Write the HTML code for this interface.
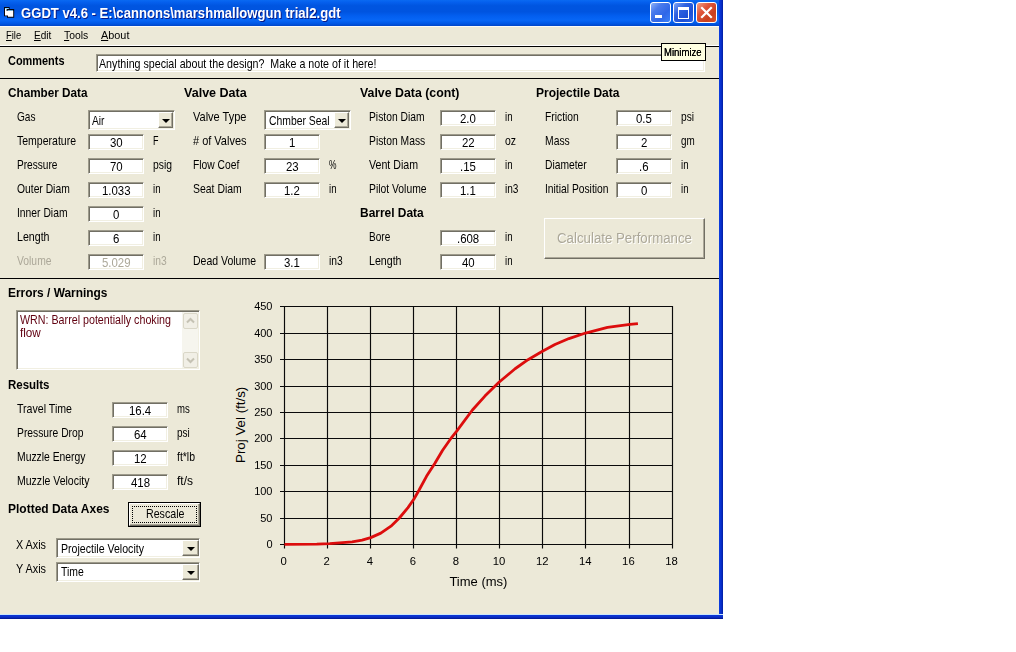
<!DOCTYPE html>
<html><head><meta charset="utf-8"><title>GGDT</title>
<style>
html,body{margin:0;padding:0;background:#fff;}
body{width:1016px;height:652px;position:relative;overflow:hidden;font-family:"Liberation Sans",sans-serif;}
#win{position:absolute;left:0;top:0;width:719px;height:614px;background:#ece9d8;}
#rb{position:absolute;left:719px;top:0;width:4px;height:619px;background:linear-gradient(to right,#0b3fe0 0,#0831d2 40%,#0628bc 75%,#001c9c 100%);}
#bb{position:absolute;left:0;top:614px;width:723px;height:5px;background:linear-gradient(#c9e6fb 0,#c9e6fb 1px,#0a35d8 1px,#0a30c8 3px,#00138c 5px);}
#tb{position:absolute;left:0;top:0;width:723px;height:26px;background:linear-gradient(to bottom,#0a6af2 0%,#0560ee 8%,#0055e0 22%,#0054e0 45%,#035ff0 62%,#0766f6 78%,#0058e6 90%,#0046c8 100%);}
.t{position:absolute;white-space:pre;transform-origin:0 0;color:#000;}
.ln{position:absolute;left:0;width:719px;height:1px;background:#000;}
.in{position:absolute;box-sizing:border-box;background:#fff;border:1px solid;border-color:#9d9a8b #fff #fff #9d9a8b;box-shadow:inset 1px 1px 0 #716f64,inset -1px -1px 0 #f1efe2;}
.cb{position:absolute;box-sizing:border-box;background:#ece9d8;border:1px solid;border-color:#fff #716f64 #716f64 #fff;box-shadow:inset -1px -1px 0 #aca899;}
.cb:after{content:"";position:absolute;left:50%;top:50%;margin:-1.5px 0 0 -4px;border:4px solid transparent;border-top:4.5px solid #000;border-bottom:none;}
.wb{position:absolute;top:2px;width:21px;height:21px;box-sizing:border-box;border:1px solid #fff;border-radius:3px;}
</style></head><body>
<div id="win"></div>
<div id="tb"></div>
<div id="rb"></div>
<div id="bb"></div>
<!-- title icon -->
<svg style="position:absolute;left:0;top:0" width="20" height="22" viewBox="0 0 20 22"><path d="M4 7H9.6V9H14.2V17.7H7V16.3H4Z" fill="#050510"/><path d="M5 11H13.2V16.8H8V15.4H5Z" fill="#fff"/><path d="M5 9H6.6V11H5Z" fill="#fff"/><rect x="5" y="8" width="3.8" height="1" fill="#8fd8ff"/><rect x="7.5" y="10" width="5.6" height="0.8" fill="#8fd8ff"/></svg>
<!-- window buttons -->
<div class="wb" style="left:650px;background:linear-gradient(135deg,#8db2fa 0%,#4a7bec 30%,#2f67e8 65%,#3b82fa 100%)"><div style="position:absolute;left:4px;top:12px;width:7px;height:3px;background:#fff"></div></div>
<div class="wb" style="left:673px;background:linear-gradient(135deg,#7fa6f6 0%,#2f62e0 35%,#1e50d6 70%,#2a63e6 100%)"><div style="position:absolute;left:4px;top:4px;width:9px;height:8px;border:1px solid #fff;border-top:3px solid #fff;box-sizing:content-box"></div></div>
<div class="wb" style="left:696px;background:linear-gradient(135deg,#f0a088 0%,#e0553a 35%,#c8401e 70%,#d8502a 100%)"><svg width="19" height="19" style="position:absolute;left:0;top:0"><path d="M5 5L14 14M14 5L5 14" stroke="#fff" stroke-width="2.2" stroke-linecap="square"/></svg></div>
<!-- separators -->
<div class="ln" style="top:26px;background:#fbfaf6"></div>
<div class="ln" style="top:45px;background:#fff"></div>
<div class="ln" style="top:46px"></div>
<div class="ln" style="top:78px"></div>
<div class="ln" style="top:278px"></div>
<!-- comments input -->
<div class="in" style="left:96px;top:54px;width:609px;height:18px"></div>
<!-- combos -->
<div class="in" style="left:88px;top:110px;width:87px;height:20px"></div><div class="cb" style="left:158px;top:112px;width:15px;height:16px"></div>
<div class="in" style="left:264px;top:110px;width:87px;height:20px"></div><div class="cb" style="left:334px;top:112px;width:15px;height:16px"></div>
<div class="in" style="left:56px;top:538px;width:144px;height:20px"></div><div class="cb" style="left:182px;top:540px;width:17px;height:16px"></div>
<div class="in" style="left:56px;top:562px;width:144px;height:20px"></div><div class="cb" style="left:182px;top:564px;width:17px;height:16px"></div>
<!-- errors textarea -->
<div class="in" style="left:16px;top:310px;width:184px;height:60px"></div>
<div style="position:absolute;left:182px;top:312px;width:16px;height:56px;background:#f6f5ee"></div>
<div style="position:absolute;left:183px;top:313px;width:15px;height:16px;box-sizing:border-box;border:1px solid #dad7c8;border-radius:2px;background:#f1efe6"><svg width="13" height="14" style="position:absolute;left:0;top:0"><path d="M3 8.5L6.5 5L10 8.5" stroke="#c5c2b4" stroke-width="2" fill="none"/></svg></div>
<div style="position:absolute;left:183px;top:352px;width:15px;height:16px;box-sizing:border-box;border:1px solid #dad7c8;border-radius:2px;background:#f1efe6"><svg width="13" height="14" style="position:absolute;left:0;top:0"><path d="M3 5.5L6.5 9L10 5.5" stroke="#c5c2b4" stroke-width="2" fill="none"/></svg></div>
<!-- calc button -->
<div style="position:absolute;left:544px;top:218px;width:161px;height:41px;box-sizing:border-box;border:1px solid;border-color:#fff #716f64 #716f64 #fff;box-shadow:inset -1px -1px 0 #aca899"></div>
<!-- rescale button -->
<div style="position:absolute;left:128px;top:502px;width:73px;height:25px;box-sizing:border-box;border:1px solid #000;"><div style="position:absolute;left:0;top:0;right:0;bottom:0;border:1px solid;border-color:#fff #716f64 #716f64 #fff;box-shadow:inset -1px -1px 0 #aca899"></div><div style="position:absolute;left:3px;top:3px;right:3px;bottom:3px;border:1px dotted #000"></div></div>
<!-- tooltip -->
<div style="position:absolute;left:661px;top:43px;width:45px;height:18px;box-sizing:border-box;border:1px solid #000;background:#ffffe1"></div>
<svg style="position:absolute;left:0;top:0" width="723" height="619" viewBox="0 0 723 619"><path d="M284.5 306V548.5M327.5 306V548.5M370.5 306V548.5M413.5 306V548.5M456.5 306V548.5M499.5 306V548.5M542.5 306V548.5M585.5 306V548.5M629.5 306V548.5M672.5 306V548.5M280 544.5H673M280 518.5H673M280 491.5H673M280 465.5H673M280 438.5H673M280 412.5H673M280 386.5H673M280 359.5H673M280 333.5H673M280 306.5H673" stroke="#0a0a0a" stroke-width="1.15" fill="none"/><path d="M284.50 544.40 L316.82 544.14 L329.75 543.56 L352.17 541.97 L362.08 540.18 L370.70 537.64 L380.83 533.11 L390.96 526.19 L399.36 518.01 L407.98 507.61 L413.80 499.27 L418.97 490.25 L426.51 476.31 L434.92 463.33 L442.46 450.45 L451.73 437.26 L456.90 430.92 L472.42 410.02 L484.92 396.09 L498.71 382.52 L515.09 368.75 L528.01 359.67 L542.45 351.23 L554.95 344.52 L568.96 338.56 L585.55 333.02 L607.53 327.47 L629.95 324.31 L637.92 323.52" stroke="#dc0d0d" stroke-width="2.8" fill="none" stroke-linejoin="round" stroke-linecap="butt"/></svg>
<span class="t" style="left:234px;top:462.5px;font-size:13.33px;line-height:13.33px;transform:rotate(-90deg);transform-origin:0 0">Proj Vel (ft/s)</span><div style="position:absolute;left:0;top:0;width:723px;height:619px;will-change:transform">
<span class="t" style="left:21.00px;top:5.98px;font-size:14.2px;line-height:14.2px;font-weight:700;color:#fff;transform:scaleX(0.9232);text-shadow:1px 1px 0 #0a1883;">GGDT v4.6 - E:\cannons\marshmallowgun trial2.gdt</span>
<span class="t" style="left:5.80px;top:29.95px;font-size:11.4px;line-height:11.4px;transform:scaleX(0.8279);"><u>F</u>ile</span>
<span class="t" style="left:33.70px;top:29.95px;font-size:11.4px;line-height:11.4px;transform:scaleX(0.8808);"><u>E</u>dit</span>
<span class="t" style="left:64.00px;top:29.95px;font-size:11.4px;line-height:11.4px;transform:scaleX(0.9100);"><u>T</u>ools</span>
<span class="t" style="left:100.80px;top:29.95px;font-size:11.4px;line-height:11.4px;transform:scaleX(0.9536);"><u>A</u>bout</span>
<span class="t" style="left:8.30px;top:54.00px;font-size:13px;line-height:13px;font-weight:700;transform:scaleX(0.8409);">Comments</span>
<span class="t" style="left:8.30px;top:86.00px;font-size:13px;line-height:13px;font-weight:700;transform:scaleX(0.9020);">Chamber Data</span>
<span class="t" style="left:184.05px;top:86.00px;font-size:13px;line-height:13px;font-weight:700;transform:scaleX(0.9647);">Valve Data</span>
<span class="t" style="left:360.30px;top:86.00px;font-size:13px;line-height:13px;font-weight:700;transform:scaleX(0.9497);">Valve Data (cont)</span>
<span class="t" style="left:536.30px;top:86.00px;font-size:13px;line-height:13px;font-weight:700;transform:scaleX(0.9244);">Projectile Data</span>
<span class="t" style="left:360.30px;top:206.00px;font-size:13px;line-height:13px;font-weight:700;transform:scaleX(0.9189);">Barrel Data</span>
<span class="t" style="left:8.30px;top:286.00px;font-size:13px;line-height:13px;font-weight:700;transform:scaleX(0.9161);">Errors / Warnings</span>
<span class="t" style="left:8.30px;top:378.00px;font-size:13px;line-height:13px;font-weight:700;transform:scaleX(0.8836);">Results</span>
<span class="t" style="left:8.30px;top:501.50px;font-size:13px;line-height:13px;font-weight:700;transform:scaleX(0.9222);">Plotted Data Axes</span>
<span class="t" style="left:99.15px;top:56.50px;font-size:13px;line-height:13px;transform:scaleX(0.8204);">Anything special about the design?  Make a note of it here!</span>
<span class="t" style="left:16.90px;top:110.00px;font-size:13px;line-height:13px;transform:scaleX(0.7759);">Gas</span>
<span class="t" style="left:16.90px;top:134.00px;font-size:13px;line-height:13px;transform:scaleX(0.8084);">Temperature</span>
<span class="t" style="left:16.90px;top:158.00px;font-size:13px;line-height:13px;transform:scaleX(0.7784);">Pressure</span>
<span class="t" style="left:16.90px;top:182.00px;font-size:13px;line-height:13px;transform:scaleX(0.7936);">Outer Diam</span>
<span class="t" style="left:16.90px;top:206.00px;font-size:13px;line-height:13px;transform:scaleX(0.7943);">Inner Diam</span>
<span class="t" style="left:16.90px;top:230.00px;font-size:13px;line-height:13px;transform:scaleX(0.8173);">Length</span>
<span class="t" style="left:16.90px;top:254.00px;font-size:13px;line-height:13px;color:#aca899;transform:scaleX(0.7954);">Volume</span>
<span class="t" style="left:152.90px;top:134.00px;font-size:13px;line-height:13px;transform:scaleX(0.6916);">F</span>
<span class="t" style="left:152.90px;top:158.00px;font-size:13px;line-height:13px;transform:scaleX(0.7963);">psig</span>
<span class="t" style="left:152.90px;top:182.00px;font-size:13px;line-height:13px;transform:scaleX(0.7407);">in</span>
<span class="t" style="left:152.90px;top:206.00px;font-size:13px;line-height:13px;transform:scaleX(0.7407);">in</span>
<span class="t" style="left:152.90px;top:230.00px;font-size:13px;line-height:13px;transform:scaleX(0.7407);">in</span>
<span class="t" style="left:152.90px;top:254.00px;font-size:13px;line-height:13px;color:#aca899;transform:scaleX(0.7921);">in3</span>
<span class="t" style="left:192.90px;top:110.00px;font-size:13px;line-height:13px;transform:scaleX(0.8475);">Valve Type</span>
<span class="t" style="left:192.90px;top:134.00px;font-size:13px;line-height:13px;transform:scaleX(0.8444);"># of Valves</span>
<span class="t" style="left:192.90px;top:158.00px;font-size:13px;line-height:13px;transform:scaleX(0.7902);">Flow Coef</span>
<span class="t" style="left:192.90px;top:182.00px;font-size:13px;line-height:13px;transform:scaleX(0.8031);">Seat Diam</span>
<span class="t" style="left:192.90px;top:254.00px;font-size:13px;line-height:13px;transform:scaleX(0.8070);">Dead Volume</span>
<span class="t" style="left:329.15px;top:158.00px;font-size:13px;line-height:13px;transform:scaleX(0.6486);">%</span>
<span class="t" style="left:329.15px;top:182.00px;font-size:13px;line-height:13px;transform:scaleX(0.7407);">in</span>
<span class="t" style="left:329.15px;top:254.00px;font-size:13px;line-height:13px;transform:scaleX(0.7921);">in3</span>
<span class="t" style="left:369.15px;top:110.00px;font-size:13px;line-height:13px;transform:scaleX(0.7920);">Piston Diam</span>
<span class="t" style="left:369.15px;top:134.00px;font-size:13px;line-height:13px;transform:scaleX(0.7944);">Piston Mass</span>
<span class="t" style="left:369.15px;top:158.00px;font-size:13px;line-height:13px;transform:scaleX(0.8169);">Vent Diam</span>
<span class="t" style="left:369.15px;top:182.00px;font-size:13px;line-height:13px;transform:scaleX(0.7957);">Pilot Volume</span>
<span class="t" style="left:369.15px;top:230.00px;font-size:13px;line-height:13px;transform:scaleX(0.7736);">Bore</span>
<span class="t" style="left:369.15px;top:254.00px;font-size:13px;line-height:13px;transform:scaleX(0.8173);">Length</span>
<span class="t" style="left:504.90px;top:110.00px;font-size:13px;line-height:13px;transform:scaleX(0.7407);">in</span>
<span class="t" style="left:504.90px;top:134.00px;font-size:13px;line-height:13px;transform:scaleX(0.8009);">oz</span>
<span class="t" style="left:504.90px;top:158.00px;font-size:13px;line-height:13px;transform:scaleX(0.7407);">in</span>
<span class="t" style="left:504.90px;top:182.00px;font-size:13px;line-height:13px;transform:scaleX(0.7777);">in3</span>
<span class="t" style="left:504.90px;top:230.00px;font-size:13px;line-height:13px;transform:scaleX(0.7407);">in</span>
<span class="t" style="left:504.90px;top:254.00px;font-size:13px;line-height:13px;transform:scaleX(0.7407);">in</span>
<span class="t" style="left:544.90px;top:110.00px;font-size:13px;line-height:13px;transform:scaleX(0.7918);">Friction</span>
<span class="t" style="left:544.90px;top:134.00px;font-size:13px;line-height:13px;transform:scaleX(0.7968);">Mass</span>
<span class="t" style="left:544.90px;top:158.00px;font-size:13px;line-height:13px;transform:scaleX(0.7915);">Diameter</span>
<span class="t" style="left:544.90px;top:182.00px;font-size:13px;line-height:13px;transform:scaleX(0.7916);">Initial Position</span>
<span class="t" style="left:680.90px;top:110.00px;font-size:13px;line-height:13px;transform:scaleX(0.7820);">psi</span>
<span class="t" style="left:680.90px;top:134.00px;font-size:13px;line-height:13px;transform:scaleX(0.7612);">gm</span>
<span class="t" style="left:680.90px;top:158.00px;font-size:13px;line-height:13px;transform:scaleX(0.7407);">in</span>
<span class="t" style="left:680.90px;top:182.00px;font-size:13px;line-height:13px;transform:scaleX(0.7407);">in</span>
<span class="t" style="left:17.15px;top:401.50px;font-size:13px;line-height:13px;transform:scaleX(0.8158);">Travel Time</span>
<span class="t" style="left:17.15px;top:425.50px;font-size:13px;line-height:13px;transform:scaleX(0.7934);">Pressure Drop</span>
<span class="t" style="left:17.15px;top:449.50px;font-size:13px;line-height:13px;transform:scaleX(0.7967);">Muzzle Energy</span>
<span class="t" style="left:17.15px;top:473.50px;font-size:13px;line-height:13px;transform:scaleX(0.8092);">Muzzle Velocity</span>
<span class="t" style="left:176.90px;top:401.50px;font-size:13px;line-height:13px;transform:scaleX(0.7351);">ms</span>
<span class="t" style="left:176.90px;top:425.50px;font-size:13px;line-height:13px;transform:scaleX(0.7669);">psi</span>
<span class="t" style="left:176.90px;top:449.50px;font-size:13px;line-height:13px;transform:scaleX(0.8033);">ft*lb</span>
<span class="t" style="left:176.90px;top:473.50px;font-size:13px;line-height:13px;transform:scaleX(0.9225);">ft/s</span>
<span class="t" style="left:15.90px;top:538.00px;font-size:13px;line-height:13px;transform:scaleX(0.8304);">X Axis</span>
<span class="t" style="left:15.90px;top:562.00px;font-size:13px;line-height:13px;transform:scaleX(0.8359);">Y Axis</span>
<span class="t" style="left:92.40px;top:113.50px;font-size:13px;line-height:13px;transform:scaleX(0.7866);">Air</span>
<span class="t" style="left:268.65px;top:114.00px;font-size:13px;line-height:13px;transform:scaleX(0.7974);">Chmber Seal</span>
<span class="t" style="left:60.90px;top:541.50px;font-size:13px;line-height:13px;transform:scaleX(0.8146);">Projectile Velocity</span>
<span class="t" style="left:60.90px;top:565.25px;font-size:13px;line-height:13px;transform:scaleX(0.8009);">Time</span>
<span class="t" style="left:19.90px;top:312.75px;font-size:13px;line-height:13px;color:#600010;transform:scaleX(0.8227);">WRN: Barrel potentially choking</span>
<span class="t" style="left:19.90px;top:325.50px;font-size:13px;line-height:13px;color:#600010;transform:scaleX(0.9000);">flow</span>
<span class="t" style="left:556.90px;top:231.15px;font-size:14px;line-height:14px;color:#aca899;transform:scaleX(0.9480);text-shadow:1px 1px 0 #fff;">Calculate Performance</span>
<span class="t" style="left:145.90px;top:507.00px;font-size:13px;line-height:13px;transform:scaleX(0.8197);">Rescale</span>
<span class="t" style="left:664.30px;top:46.69px;font-size:11px;line-height:11px;transform:scaleX(0.8662);text-shadow:0 0 0.3px #000;">Minimize</span>
<span class="t" style="left:280.45px;top:555.73px;font-size:11.3px;line-height:11.3px;">0</span>
<span class="t" style="left:323.55px;top:555.73px;font-size:11.3px;line-height:11.3px;">2</span>
<span class="t" style="left:366.65px;top:555.73px;font-size:11.3px;line-height:11.3px;">4</span>
<span class="t" style="left:409.75px;top:555.73px;font-size:11.3px;line-height:11.3px;">6</span>
<span class="t" style="left:452.85px;top:555.73px;font-size:11.3px;line-height:11.3px;">8</span>
<span class="t" style="left:492.81px;top:555.73px;font-size:11.3px;line-height:11.3px;">10</span>
<span class="t" style="left:535.91px;top:555.73px;font-size:11.3px;line-height:11.3px;">12</span>
<span class="t" style="left:579.01px;top:555.73px;font-size:11.3px;line-height:11.3px;">14</span>
<span class="t" style="left:622.11px;top:555.73px;font-size:11.3px;line-height:11.3px;">16</span>
<span class="t" style="left:665.21px;top:555.73px;font-size:11.3px;line-height:11.3px;">18</span>
<span class="t" style="left:266.38px;top:538.89px;font-size:11px;line-height:11px;">0</span>
<span class="t" style="left:260.25px;top:512.50px;font-size:11px;line-height:11px;">50</span>
<span class="t" style="left:254.14px;top:486.11px;font-size:11px;line-height:11px;">100</span>
<span class="t" style="left:254.14px;top:459.72px;font-size:11px;line-height:11px;">150</span>
<span class="t" style="left:254.14px;top:433.33px;font-size:11px;line-height:11px;">200</span>
<span class="t" style="left:254.14px;top:406.94px;font-size:11px;line-height:11px;">250</span>
<span class="t" style="left:254.14px;top:380.55px;font-size:11px;line-height:11px;">300</span>
<span class="t" style="left:254.14px;top:354.16px;font-size:11px;line-height:11px;">350</span>
<span class="t" style="left:254.14px;top:327.77px;font-size:11px;line-height:11px;">400</span>
<span class="t" style="left:254.14px;top:301.38px;font-size:11px;line-height:11px;">450</span>
<span class="t" style="left:449.40px;top:574.50px;font-size:13px;line-height:13px;">Time (ms)</span>
<div class="in" style="left:88px;top:134px;width:56px;height:16px"></div>
<span class="t" style="left:109.89px;top:136.65px;font-size:12.7px;line-height:12.7px;transform:scaleX(0.9);">30</span>
<div class="in" style="left:88px;top:158px;width:56px;height:16px"></div>
<span class="t" style="left:109.89px;top:160.65px;font-size:12.7px;line-height:12.7px;transform:scaleX(0.9);">70</span>
<div class="in" style="left:88px;top:182px;width:56px;height:16px"></div>
<span class="t" style="left:101.96px;top:184.65px;font-size:12.7px;line-height:12.7px;transform:scaleX(0.9);">1.033</span>
<div class="in" style="left:88px;top:206px;width:56px;height:16px"></div>
<span class="t" style="left:113.07px;top:208.65px;font-size:12.7px;line-height:12.7px;transform:scaleX(0.9);">0</span>
<div class="in" style="left:88px;top:230px;width:56px;height:16px"></div>
<span class="t" style="left:113.07px;top:232.65px;font-size:12.7px;line-height:12.7px;transform:scaleX(0.9);">6</span>
<div class="in" style="left:88px;top:254px;width:56px;height:16px"></div>
<span class="t" style="left:101.96px;top:256.65px;font-size:12.7px;line-height:12.7px;transform:scaleX(0.9);color:#aca899;">5.029</span>
<div class="in" style="left:264px;top:134px;width:56px;height:16px"></div>
<span class="t" style="left:289.07px;top:136.65px;font-size:12.7px;line-height:12.7px;transform:scaleX(0.9);">1</span>
<div class="in" style="left:264px;top:158px;width:56px;height:16px"></div>
<span class="t" style="left:285.89px;top:160.65px;font-size:12.7px;line-height:12.7px;transform:scaleX(0.9);">23</span>
<div class="in" style="left:264px;top:182px;width:56px;height:16px"></div>
<span class="t" style="left:284.31px;top:184.65px;font-size:12.7px;line-height:12.7px;transform:scaleX(0.9);">1.2</span>
<div class="in" style="left:264px;top:254px;width:56px;height:16px"></div>
<span class="t" style="left:284.31px;top:256.65px;font-size:12.7px;line-height:12.7px;transform:scaleX(0.9);">3.1</span>
<div class="in" style="left:440px;top:110px;width:56px;height:16px"></div>
<span class="t" style="left:460.31px;top:112.65px;font-size:12.7px;line-height:12.7px;transform:scaleX(0.9);">2.0</span>
<div class="in" style="left:440px;top:134px;width:56px;height:16px"></div>
<span class="t" style="left:461.89px;top:136.65px;font-size:12.7px;line-height:12.7px;transform:scaleX(0.9);">22</span>
<div class="in" style="left:440px;top:158px;width:56px;height:16px"></div>
<span class="t" style="left:460.31px;top:160.65px;font-size:12.7px;line-height:12.7px;transform:scaleX(0.9);">.15</span>
<div class="in" style="left:440px;top:182px;width:56px;height:16px"></div>
<span class="t" style="left:460.31px;top:184.65px;font-size:12.7px;line-height:12.7px;transform:scaleX(0.9);">1.1</span>
<div class="in" style="left:440px;top:230px;width:56px;height:16px"></div>
<span class="t" style="left:457.13px;top:232.65px;font-size:12.7px;line-height:12.7px;transform:scaleX(0.9);">.608</span>
<div class="in" style="left:440px;top:254px;width:56px;height:16px"></div>
<span class="t" style="left:461.89px;top:256.65px;font-size:12.7px;line-height:12.7px;transform:scaleX(0.9);">40</span>
<div class="in" style="left:616px;top:110px;width:56px;height:16px"></div>
<span class="t" style="left:636.31px;top:112.65px;font-size:12.7px;line-height:12.7px;transform:scaleX(0.9);">0.5</span>
<div class="in" style="left:616px;top:134px;width:56px;height:16px"></div>
<span class="t" style="left:641.07px;top:136.65px;font-size:12.7px;line-height:12.7px;transform:scaleX(0.9);">2</span>
<div class="in" style="left:616px;top:158px;width:56px;height:16px"></div>
<span class="t" style="left:639.48px;top:160.65px;font-size:12.7px;line-height:12.7px;transform:scaleX(0.9);">.6</span>
<div class="in" style="left:616px;top:182px;width:56px;height:16px"></div>
<span class="t" style="left:641.07px;top:184.65px;font-size:12.7px;line-height:12.7px;transform:scaleX(0.9);">0</span>
<div class="in" style="left:112px;top:402px;width:56px;height:16px"></div>
<span class="t" style="left:129.13px;top:404.65px;font-size:12.7px;line-height:12.7px;transform:scaleX(0.9);">16.4</span>
<div class="in" style="left:112px;top:426px;width:56px;height:16px"></div>
<span class="t" style="left:133.89px;top:428.65px;font-size:12.7px;line-height:12.7px;transform:scaleX(0.9);">64</span>
<div class="in" style="left:112px;top:450px;width:56px;height:16px"></div>
<span class="t" style="left:133.89px;top:452.65px;font-size:12.7px;line-height:12.7px;transform:scaleX(0.9);">12</span>
<div class="in" style="left:112px;top:474px;width:56px;height:16px"></div>
<span class="t" style="left:130.72px;top:476.65px;font-size:12.7px;line-height:12.7px;transform:scaleX(0.9);">418</span></div>
</body></html>
